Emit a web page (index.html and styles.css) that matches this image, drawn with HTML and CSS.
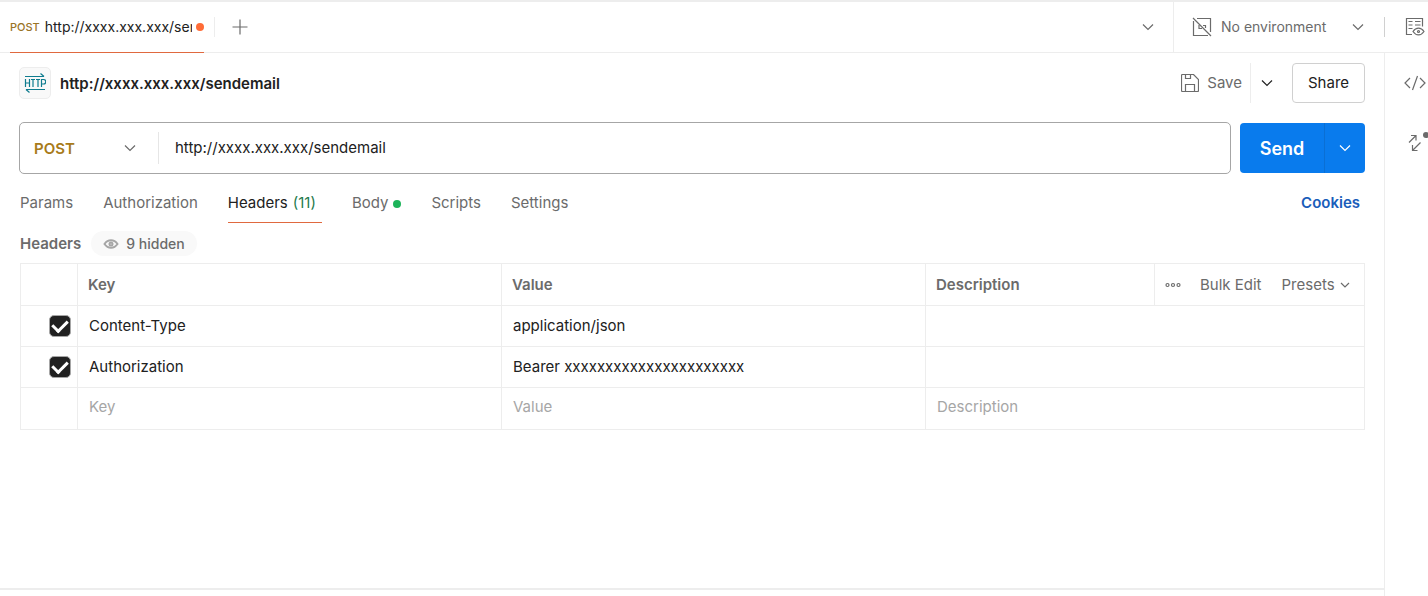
FILE: index.html
```html
<!DOCTYPE html>
<html lang="en">
<head>
<meta charset="utf-8">
<title>http://xxxx.xxx.xxx/sendemail</title>
<meta name="viewport" content="width=device-width, initial-scale=1">
<link rel="stylesheet" href="styles.css">
</head>
<body>
<header class="topbar">
  <div class="tabs">
    <button class="tab" type="button"><span class="tab-method">POST</span><span class="tab-title">http://xxxx.xxx.xxx/sendemail</span><span class="dot dot-unsaved"></span></button>
    <span class="tab-divider"></span>
    <button class="icon-btn add-tab" type="button" aria-label="New tab"><svg width="16" height="16" viewBox="0 0 16 16"><path d="M8 0.500v15M0.500 8h15"/></svg></button>
    <button class="icon-btn tab-list" type="button" aria-label="Open tabs"><svg width="12" height="8" viewBox="0 0 12 8"><path d="M1 1.500l5 5 5-5"/></svg></button>
  </div>
  <button class="environment" type="button">
    <svg width="20" height="20" viewBox="0 0 20 20"><path d="M5 1.500h13.500V15M1.500 4v14.500H16M1 1l18 18"/><path d="M7 8v3.500h3M11 8.500h2.500V11"/></svg>
    <span>No environment</span>
    <svg class="env-chevron" width="12" height="8" viewBox="0 0 12 8"><path d="M1 1.500l5 5 5-5"/></svg>
  </button>
  <div class="env-view">
    <button class="icon-btn" type="button" aria-label="Environment quick look"><svg width="20" height="20" viewBox="0 0 20 20"><path d="M7 17.500H1.500v-16h16v8M3.500 4.500h4M10 4.500h5.500M3.500 8h4M10 8h5.500M3.500 11.500h4"/><path d="M8 14.500c3-4.500 8-4.500 11 0-3 4.500-8 4.500-11 0z"/><circle cx="13.500" cy="14.500" r="1"/></svg></button>
  </div>
</header>
<div class="workspace">
  <main class="request">
    <div class="title-row">
      <span class="http-badge"><svg width="22" height="20" viewBox="0 0 22 20"><path d="M1 3.500h19M16.500 0.500l3.500 3M21 16.500H2M5.500 19.500L2 16.500"/><path d="M1.500 6v8M5.500 6v8M1.500 10h4M7 6.500h4M9 6.500V14M12 6.500h4M14 6.500V14M17.500 14V6.500h2a2 2 0 0 1 0 4.500h-2"/></svg></span>
      <h1>http://xxxx.xxx.xxx/sendemail</h1>
      <button class="save" type="button"><svg width="18" height="18" viewBox="0 0 18 18"><path d="M1.500 0.500h11l5 5v11a1 1 0 0 1-1 1h-15a1 1 0 0 1-1-1v-15a1 1 0 0 1 1-1zM4.500 0.500v4h5v-4M4.500 17.500v-7h9v7"/></svg>Save</button>
      <button class="icon-btn save-more" type="button" aria-label="Save options"><svg width="12" height="8" viewBox="0 0 12 8"><path d="M1 1.500l5 5 5-5"/></svg></button>
      <button class="share" type="button">Share</button>
    </div>
    <form class="url-row">
      <div class="url-box">
        <div class="method-wrap">
          <select class="method" aria-label="Method"><option>POST</option><option>GET</option></select>
          <svg width="12" height="8" viewBox="0 0 12 8"><path d="M1 1.500l5 5 5-5"/></svg>
        </div>
        <input class="url" type="text" aria-label="Request URL" value="http://xxxx.xxx.xxx/sendemail">
      </div>
      <div class="send-group">
        <button class="send" type="button">Send</button>
        <button class="send-more" type="button" aria-label="Send options"><svg width="12" height="8" viewBox="0 0 12 8"><path d="M1 1.500l5 5 5-5"/></svg></button>
      </div>
    </form>
    <nav class="sections">
      <a href="#params">Params</a>
      <a href="#authorization">Authorization</a>
      <a class="active" href="#headers">Headers <span class="count">(11)</span></a>
      <a href="#body">Body<span class="dot dot-body"></span></a>
      <a href="#scripts">Scripts</a>
      <a href="#settings">Settings</a>
      <a class="cookies" href="#cookies">Cookies</a>
    </nav>
    <div class="headers-bar">
      <h2>Headers</h2>
      <button class="hidden-pill" type="button"><svg width="16" height="10" viewBox="0 0 16 10"><path d="M1.500 5c3.500-5 9.500-5 13 0-3.500 5-9.500 5-13 0z"/><circle cx="8" cy="5" r="1.500"/></svg>9 hidden</button>
    </div>
    <table class="grid">
      <colgroup><col class="col-check"><col class="col-key"><col class="col-key"><col><col class="col-actions"></colgroup>
      <thead>
        <tr>
          <td></td><th scope="col">Key</th><th scope="col">Value</th><th scope="col">Description</th>
          <td class="actions-cell"><div class="actions">
            <button class="icon-btn more" type="button" aria-label="More"><svg width="16" height="6" viewBox="0 0 16 6"><circle cx="2.500" cy="3" r="1.500"/><circle cx="8" cy="3" r="1.500"/><circle cx="13.500" cy="3" r="1.500"/></svg></button>
            <button class="link-btn" type="button">Bulk Edit</button>
            <button class="link-btn" type="button">Presets<svg width="10" height="6" viewBox="0 0 10 6"><path d="M1 1l4 4 4-4"/></svg></button>
          </div></td>
        </tr>
      </thead>
      <tbody>
        <tr><td class="check-cell"><input type="checkbox" checked aria-label="Content-Type"></td><td>Content-Type</td><td>application/json</td><td colspan="2"></td></tr>
        <tr><td class="check-cell"><input type="checkbox" checked aria-label="Authorization"></td><td>Authorization</td><td>Bearer xxxxxxxxxxxxxxxxxxxxxx</td><td colspan="2"></td></tr>
        <tr><td></td><td><input class="cell" type="text" placeholder="Key" aria-label="Key"></td><td><input class="cell" type="text" placeholder="Value" aria-label="Value"></td><td colspan="2"><input class="cell" type="text" placeholder="Description" aria-label="Description"></td></tr>
      </tbody>
    </table>
    <div class="response-edge"></div>
  </main>
  <aside class="rail">
    <button class="icon-btn" type="button" aria-label="Code"><svg width="22" height="16" viewBox="0 0 22 16"><path d="M6 3L1 8l5 5M16 3l5 5-5 5M13.500 1l-5 14"/></svg></button>
    <button class="icon-btn related" type="button" aria-label="Related requests"><svg width="14" height="18" viewBox="0 0 14 18"><path d="M1 8.500l7-7M3 1.500h5v5M12.500 8.500l-8 8M4.500 11v5.500h5"/></svg><span class="rail-dot"></span></button>
  </aside>
</div>
</body>
</html>
```
FILE: styles.css
```css
* { box-sizing: border-box; }
html { overflow: hidden; }
body {
  margin: 0;
  min-height: 100vh;
  display: flex;
  flex-direction: column;
  background: #fff;
  color: #212121;
  font: 15px/20px Inter, "Liberation Sans", sans-serif;
}
button, input, select { font: inherit; color: inherit; margin: 0; }
button { border: 0; padding: 0; background: none; cursor: pointer; }
a { color: inherit; text-decoration: none; }
h1, h2 { margin: 0; font-size: 15px; line-height: 20px; font-weight: 600; }
svg { display: block; flex: none; fill: none; stroke: currentColor; stroke-width: 1.2; }
.icon-btn { display: flex; align-items: center; justify-content: center; color: #6b6b6b; }
.dot { flex: none; width: 8px; height: 8px; border-radius: 50%; }

.topbar { display: flex; height: 53px; border-top: 2px solid #ededed; border-bottom: 1px solid #ededed; }
.tabs { flex: 1; display: flex; align-items: center; padding: 0 19px 0 10px; }
.tab { width: 194px; height: 52px; display: flex; align-items: center; border-bottom: 1px solid #e0693f; }
.tab-method { margin-right: 5px; font-size: 11px; font-weight: 500; color: #9a7426; }
.tab-title { flex: 1; overflow: hidden; white-space: nowrap; text-align: left; font-size: 14px; }
.dot-unsaved { margin-left: 4px; background: #ff6c37; }
.tab-divider { width: 1px; height: 20px; margin: 0 17px 0 10px; background: #ededed; }
.tab-list { margin-left: auto; }
.environment { width: 211px; display: flex; align-items: center; gap: 9px; padding: 0 20px 0 18px; border-left: 1px solid #ededed; color: #6b6b6b; font-size: 14px; }
.env-chevron { margin-left: auto; }
.env-view { width: 44px; display: flex; align-items: center; }
.env-view .icon-btn { height: 20px; padding-left: 20px; border-left: 1px solid #d0d0d0; }

.workspace { flex: 1; display: flex; }
.request { flex: 1; min-width: 0; display: flex; flex-direction: column; padding-top: 10px; }
.title-row { display: flex; align-items: center; padding: 0 19px; }
.title-row h1 { line-height: 22px; padding-top: 2px; }
.http-badge { width: 32px; height: 32px; margin-right: 9px; display: flex; align-items: center; justify-content: center; border: 1px solid #ededed; border-radius: 5px; background: #f9f9f9; color: #0f7c8f; }
.save { display: flex; align-items: center; gap: 8px; margin-left: auto; padding-right: 8px; color: #6b6b6b; }
.save-more { width: 42px; height: 40px; padding-right: 9px; border-left: 1px solid #ededed; color: #212121; }
.share { width: 73px; height: 40px; border: 1px solid #d0d0d0; border-radius: 4px; }

.url-row { display: flex; gap: 9px; padding: 19px 19px 0; }
.url-box { flex: 1; display: flex; align-items: center; height: 52px; border: 1px solid #a6a6a6; border-radius: 5px; }
.method-wrap { width: 139px; height: 32px; display: flex; align-items: center; padding: 0 22px 0 14px; border-right: 1px solid #e6e6e6; color: #6b6b6b; }
.method { flex: 1; appearance: none; border: 0; padding: 2px 0 0; background: none; color: #a87b1a; font-weight: 600; }
.url { flex: 1; border: 0; padding: 0 16px; background: none; outline: 0; }
.send-group { display: flex; align-self: center; width: 125px; height: 50px; border-radius: 4px; background: #097bed; color: #fff; }
.send { flex: 1; padding-top: 2px; font-size: 18px; font-weight: 600; }
.send-more { width: 41px; display: flex; align-items: center; justify-content: center; border-left: 1px solid #0a6fd4; }

.sections { display: flex; gap: 30px; padding: 19px 24px 0 20px; color: #6b6b6b; }
.sections a { height: 30px; display: flex; gap: 5px; }
.sections .active { padding-right: 6px; border-bottom: 1px solid #e0693f; color: #212121; }
.count { color: #1f7a4d; }
.dot-body { align-self: flex-start; margin-top: 7px; background: #1db45a; }
.sections .cookies { margin-left: auto; color: #1a5dba; font-weight: 600; }

.headers-bar { display: flex; align-items: center; gap: 10px; padding: 8px 20px 7px; color: #6b6b6b; }
.hidden-pill { height: 25px; display: flex; align-items: center; gap: 7px; padding: 0 12px; border-radius: 13px; background: #f9f9f9; font-size: 14px; font-weight: 500; }
.hidden-pill svg { color: #a6a6a6; stroke-width: 2; }

.grid { width: calc(100% - 39px); margin-left: 20px; border-collapse: collapse; table-layout: fixed; }
.col-check { width: 57px; }
.col-key { width: 424px; }
.col-actions { width: 210px; }
.grid td, .grid th { height: 41px; padding: 0 11px; border: 1px solid #ededed; text-align: left; }
.grid th { padding: 0 10px; color: #6b6b6b; font-weight: 600; }
.grid thead td, .grid thead th { height: 42px; }
.grid tbody tr:last-child td { height: 42px; padding-bottom: 3px; }
.grid .check-cell { padding: 0 6px 0 28px; }
.grid input[type="checkbox"] { appearance: none; display: block; width: 22px; height: 22px; border: 1px solid #a6a6a6; border-radius: 5px; background: #212121; }
.grid input[type="checkbox"]::after { content: ""; display: block; width: 7px; height: 12px; margin: 2px auto 0; border: solid #fff; border-width: 0 3px 3px 0; transform: translateY(-1px) rotate(45deg); }
.cell { display: block; width: 100%; border: 0; padding: 0; background: none; outline: 0; }
.cell::placeholder { color: #a6a6a6; opacity: 1; }
.actions { display: flex; align-items: center; gap: 20px; color: #6b6b6b; white-space: nowrap; }
.more { width: 14px; }
.link-btn { display: flex; align-items: center; gap: 5px; }
.response-edge { margin: auto 0 6px; height: 2px; background: #ededed; }

.rail { width: 44px; display: flex; flex-direction: column; align-items: flex-start; gap: 43px; padding: 22px 0 0 19px; border-left: 1px solid #ededed; }
.related { position: relative; margin-left: 4px; }
.rail-dot { position: absolute; top: -2px; left: 15px; width: 6px; height: 6px; border-radius: 50%; background: #6b6b6b; }
```
